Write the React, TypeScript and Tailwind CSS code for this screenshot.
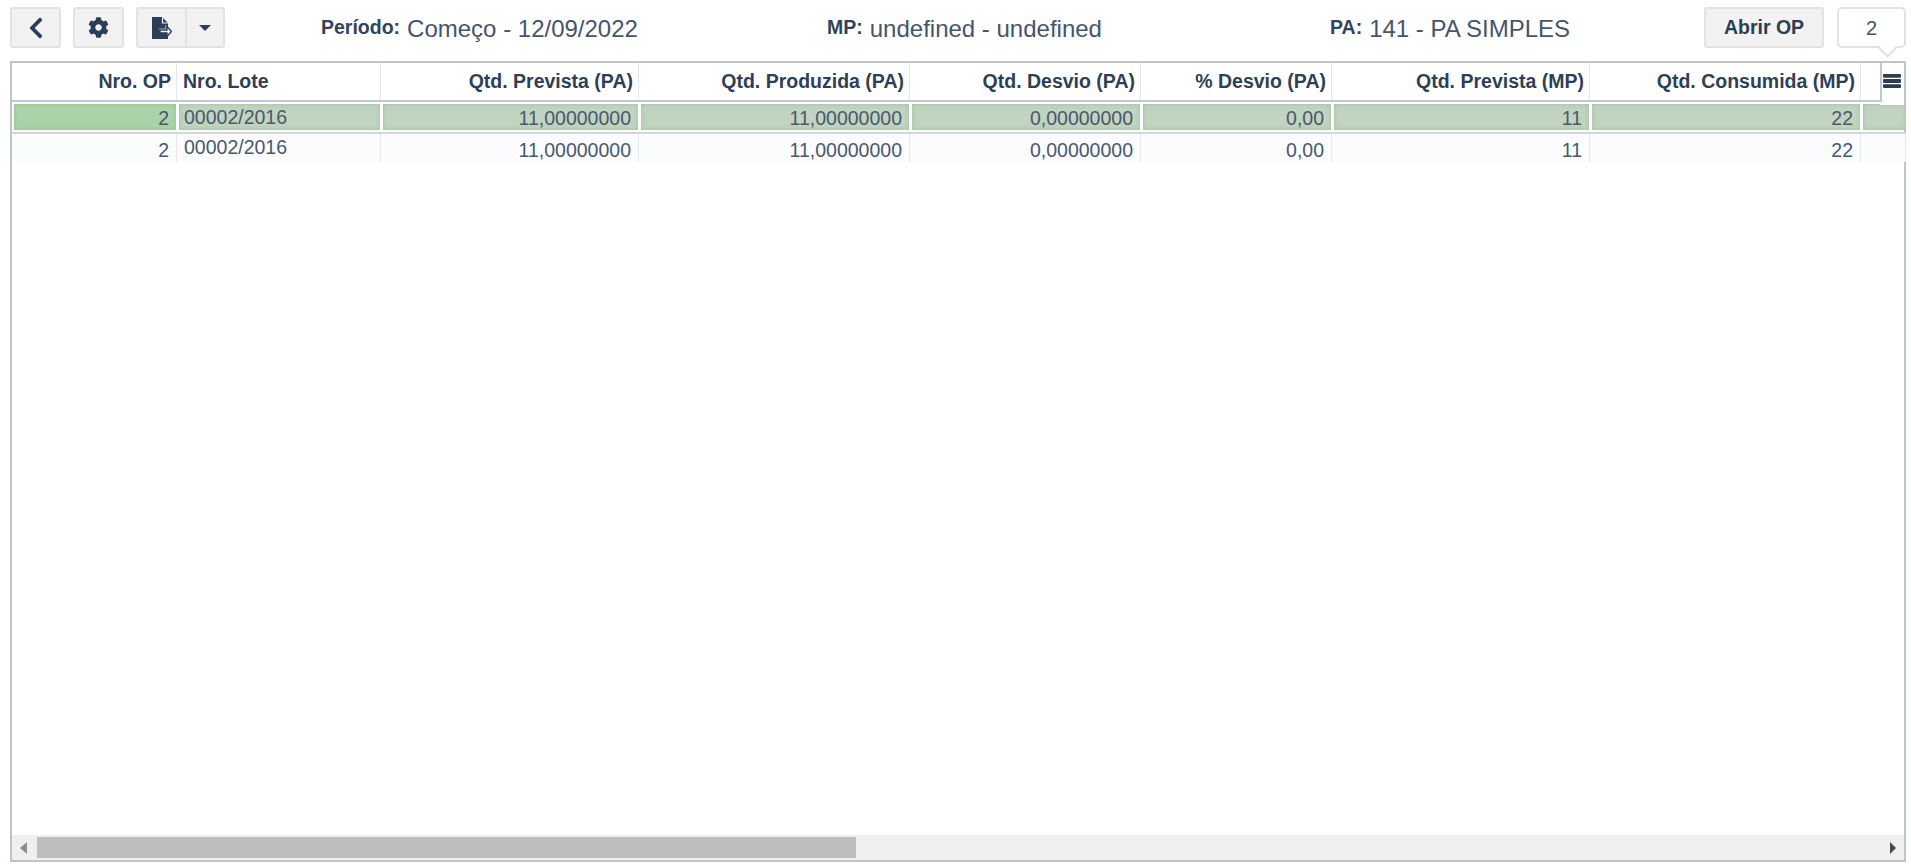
import { FaChevronLeft, FaCog } from "react-icons/fa";

const gridCols = "grid grid-cols-[165px_204px_258px_271px_231px_191px_258px_271px_1fr]";

const columns = [
  "Nro. OP",
  "Nro. Lote",
  "Qtd. Prevista (PA)",
  "Qtd. Produzida (PA)",
  "Qtd. Desvio (PA)",
  "% Desvio (PA)",
  "Qtd. Prevista (MP)",
  "Qtd. Consumida (MP)",
  "",
];

const row = ["2", "00002/2016", "11,00000000", "11,00000000", "0,00000000", "0,00", "11", "22", ""];

function ToolButton({ children, className }: { children: React.ReactNode; className: string }) {
  return (
    <button className={`flex h-[41px] items-center justify-center rounded-[3px] border-2 border-[#e2e2e2] bg-[#f2f2f2] text-[#2c3e56] ${className}`}>
      {children}
    </button>
  );
}

function Info({ label, value, className }: { label: string; value: string; className: string }) {
  return (
    <div className={`flex items-center gap-[7px] ${className}`}>
      <span className="-translate-y-px text-[19.5px] font-bold text-[#33435a]">{label}</span>
      <span className="text-[24px] text-[#46556b]">{value}</span>
    </div>
  );
}

function ExportIcon() {
  return (
    <svg width="20" height="22" viewBox="0 0 20 22">
      <path d="M0 0h10l6 6v16H0z" fill="#2c3e56" />
      <path d="M10.5 0.5v5.5h5.5" fill="none" stroke="#f2f2f2" strokeWidth="1.2" />
      <path d="M8 13h7v-3.5l4.5 5-4.5 5V16H8z" fill="#f2f2f2" stroke="#2c3e56" strokeWidth="1.3" />
      <path d="M6.8 12h7l-0.1-4 " fill="none" stroke="#f2f2f2" strokeWidth="0.6" />
    </svg>
  );
}

export default function App() {
  return (
    <div className="h-[868px] w-[1911px] overflow-hidden bg-white font-['Liberation_Sans',Arial,sans-serif]">
      <div className="flex h-[61px] items-start pl-[10px] pr-[5px] pt-[7px]">
        <ToolButton className="w-[51px]">
          <FaChevronLeft size={24} />
        </ToolButton>
        <ToolButton className="ml-[12px] w-[51px]">
          <FaCog size={21} />
        </ToolButton>
        <div className="ml-[12px] flex">
          <ToolButton className="w-[49px] rounded-r-none border-r-0">
            <ExportIcon />
          </ToolButton>
          <ToolButton className="w-[40px] rounded-l-none">
            <svg width="12" height="6" viewBox="0 0 12 6" fill="#2c3e56">
              <path d="M0 0h12L6 6z" />
            </svg>
          </ToolButton>
        </div>
        <Info label="Período:" value="Começo - 12/09/2022" className="ml-[96px] mt-[7px] h-[30px] w-[506px]" />
        <Info label="MP:" value="undefined - undefined" className="mt-[7px] h-[30px] w-[503px]" />
        <Info label="PA:" value="141 - PA SIMPLES" className="mt-[7px] h-[30px] w-[374px]" />
        <ToolButton className="w-[120px] text-[19.5px] font-bold">Abrir OP</ToolButton>
        <div className="relative ml-[13px] flex h-[41px] w-[69px] items-center justify-center rounded-[5px] border-2 border-[#e2e2e2] bg-white text-[20px] text-[#46556b]">
          2
          <div className="absolute left-[42px] top-[33px] h-[13px] w-[13px] rotate-45 border-b-2 border-r-2 border-[#e2e2e2] bg-white" />
        </div>
      </div>

      <div className="relative ml-[10px] flex h-[801px] w-[1896px] flex-col border-2 border-[#bfc4c9] bg-white">
        <div className={`${gridCols} h-[39px] border-b-2 border-[#c4c8cd]`}>
          {columns.map((c, i) => (
            <div
              key={i}
              className={`flex items-center whitespace-nowrap border-r border-[#e3e6ea] pr-[5px] text-[19.5px] font-bold text-[#2e3f57] ${i === 1 ? "justify-start pl-[6px]" : "justify-end"}`}
            >
              {c}
            </div>
          ))}
        </div>
        <div className={`${gridCols} mr-[-2px] h-[32px] border-b-2 border-[#d3d7dc] py-[2px]`}>
          {row.map((c, i) => (
            <div
              key={i}
              className={`ml-[2px] flex items-center overflow-hidden whitespace-nowrap pl-[5px] pr-[7px] text-[19.5px] leading-[22px] text-[#4a586d] shadow-[inset_0_0_4px_rgba(130,170,130,0.5)] ${i === 0 ? "bg-[#a9d3a9]" : "bg-[#c0d4bf]"} ${i === 8 ? "" : "mr-px"} ${i === 1 ? "justify-start" : "justify-end pt-[2px]"}`}
            >
              {c}
            </div>
          ))}
        </div>
        <div className={`${gridCols} mr-[-2px] h-[28px] bg-[#fbfcfe]`}>
          {row.map((c, i) => (
            <div
              key={i}
              className={`flex whitespace-nowrap border-r border-[#e6e8ec] pr-[7px] text-[19.5px] leading-[22px] text-[#4a586d] ${i === 1 ? "justify-start pl-[7px] pt-[2px]" : "justify-end pt-[5px]"}`}
            >
              {c}
            </div>
          ))}
        </div>
        <div className="flex-1" />
        <div className="flex h-[25px] items-center bg-[#efefef]">
          <svg width="7" height="12" viewBox="0 0 7 12" className="ml-[8px] fill-[#8d8d8d]">
            <path d="M7 0v12L0 6z" />
          </svg>
          <div className="ml-[10px] h-[21px] w-[819px] bg-[#bebebe]" />
          <svg width="6" height="12" viewBox="0 0 6 12" className="ml-auto mr-[8px] fill-[#4a4a4a]">
            <path d="M0 0v12l6-6z" />
          </svg>
        </div>
        <div className="absolute right-0 top-0 h-[42px] w-[24px] bg-white">
          <div className="flex h-[39px] items-center justify-center border-l-2 border-[#c4c8cd] pb-[3px] pr-[2px] text-[#2c3e56]">
            <svg width="18" height="14" viewBox="0 0 18 14" fill="currentColor">
              <rect width="18" height="3.8" rx="1" />
              <rect y="5.1" width="18" height="3.8" rx="1" />
              <rect y="10.2" width="18" height="3.8" rx="1" />
            </svg>
          </div>
        </div>
      </div>
    </div>
  );
}
